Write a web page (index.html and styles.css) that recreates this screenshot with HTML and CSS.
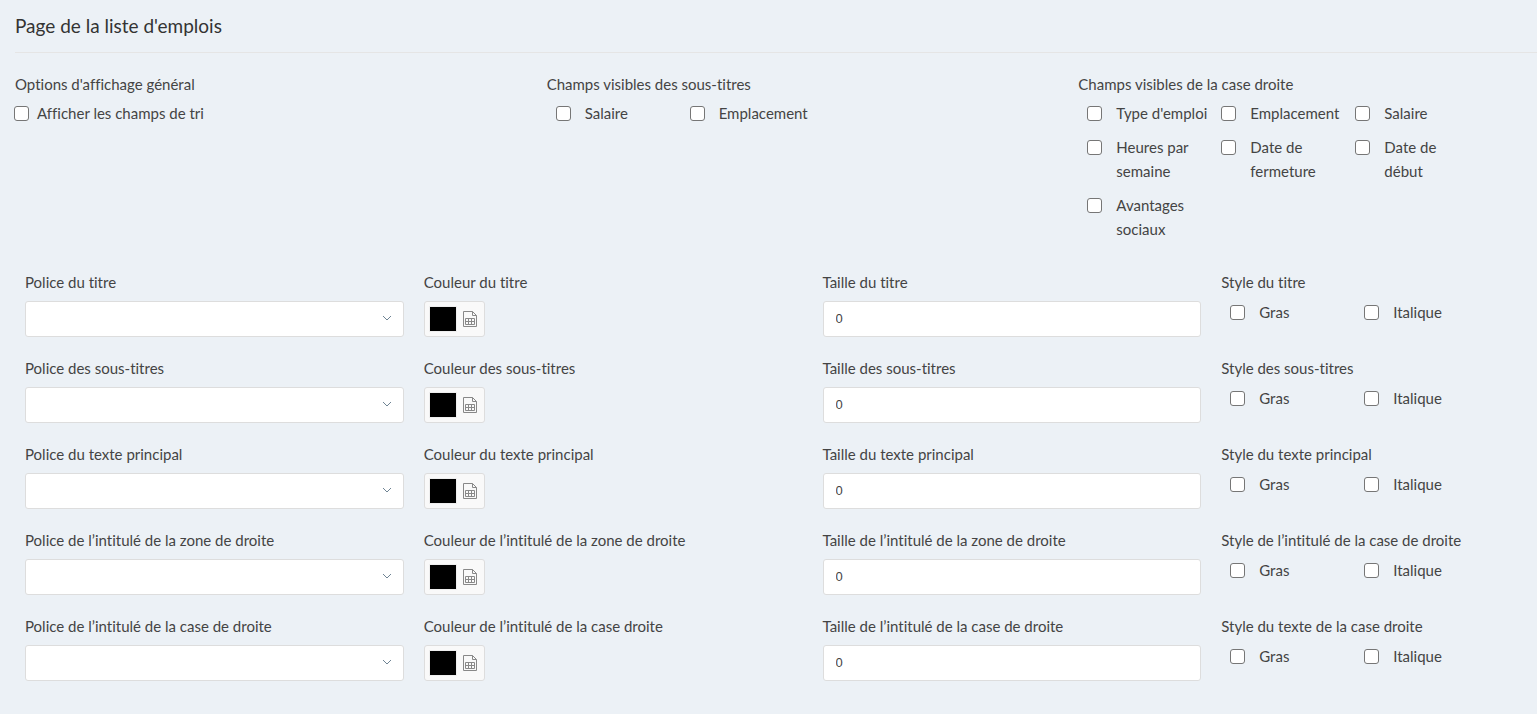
FILE: index.html
```
<!DOCTYPE html>
<html lang="fr">

<head>
    <meta charset="UTF-8">
    <meta name="viewport" content="width=device-width, initial-scale=1.0">
    <title>Page de la liste d'emplois</title>
    <link rel="stylesheet" href="styles.css">
</head>

<body>
    <!-- Icône partagée par les sélecteurs de couleur -->
    <svg class="sprite" aria-hidden="true">
        <symbol id="icon-palette" viewBox="0 0 16 18">
            <path d="M2 1.5h8.5l4 4v11H1.5v-15zM10.5 1.5v4h4M3.5 8.5h9v6h-9zM3.5 11.5h9M6.5 8.5v6M9.5 8.5v6" fill="none" stroke="currentColor" />
        </symbol>
    </svg>

    <main class="settings">
        <h1 class="page-title">Page de la liste d'emplois</h1>

        <!-- Options d'affichage -->
        <div class="options">
            <fieldset class="group">
                <legend>Options d'affichage général</legend>
                <label class="check-single"><input type="checkbox"><span>Afficher les champs de tri</span></label>
            </fieldset>
            <fieldset class="group">
                <legend>Champs visibles des sous-titres</legend>
                <div class="checks">
                    <label class="check"><input type="checkbox"><span>Salaire</span></label>
                    <label class="check"><input type="checkbox"><span>Emplacement</span></label>
                </div>
            </fieldset>
            <fieldset class="group">
                <legend>Champs visibles de la case droite</legend>
                <div class="checks">
                    <label class="check"><input type="checkbox"><span>Type d'emploi</span></label>
                    <label class="check"><input type="checkbox"><span>Emplacement</span></label>
                    <label class="check"><input type="checkbox"><span>Salaire</span></label>
                    <label class="check"><input type="checkbox"><span>Heures par semaine</span></label>
                    <label class="check"><input type="checkbox"><span>Date de fermeture</span></label>
                    <label class="check"><input type="checkbox"><span>Date de début</span></label>
                    <label class="check"><input type="checkbox"><span>Avantages sociaux</span></label>
                </div>
            </fieldset>
        </div>

        <!-- Polices, couleurs, tailles et styles -->
        <div class="fonts">
            <div class="field">
                <label for="title-font">Police du titre</label>
                <select id="title-font" class="select"><option></option></select>
            </div>
            <div class="field">
                <label for="title-color">Couleur du titre</label>
                <button type="button" id="title-color" class="color-button"><span class="swatch"></span><svg class="icon"><use href="#icon-palette" /></svg></button>
            </div>
            <div class="field">
                <label for="title-size">Taille du titre</label>
                <input type="text" id="title-size" class="input" value="0">
            </div>
            <fieldset class="group">
                <legend>Style du titre</legend>
                <div class="checks">
                    <label class="check"><input type="checkbox"><span>Gras</span></label>
                    <label class="check"><input type="checkbox"><span>Italique</span></label>
                </div>
            </fieldset>

            <div class="field">
                <label for="subtitle-font">Police des sous-titres</label>
                <select id="subtitle-font" class="select"><option></option></select>
            </div>
            <div class="field">
                <label for="subtitle-color">Couleur des sous-titres</label>
                <button type="button" id="subtitle-color" class="color-button"><span class="swatch"></span><svg class="icon"><use href="#icon-palette" /></svg></button>
            </div>
            <div class="field">
                <label for="subtitle-size">Taille des sous-titres</label>
                <input type="text" id="subtitle-size" class="input" value="0">
            </div>
            <fieldset class="group">
                <legend>Style des sous-titres</legend>
                <div class="checks">
                    <label class="check"><input type="checkbox"><span>Gras</span></label>
                    <label class="check"><input type="checkbox"><span>Italique</span></label>
                </div>
            </fieldset>

            <div class="field">
                <label for="text-font">Police du texte principal</label>
                <select id="text-font" class="select"><option></option></select>
            </div>
            <div class="field">
                <label for="text-color">Couleur du texte principal</label>
                <button type="button" id="text-color" class="color-button"><span class="swatch"></span><svg class="icon"><use href="#icon-palette" /></svg></button>
            </div>
            <div class="field">
                <label for="text-size">Taille du texte principal</label>
                <input type="text" id="text-size" class="input" value="0">
            </div>
            <fieldset class="group">
                <legend>Style du texte principal</legend>
                <div class="checks">
                    <label class="check"><input type="checkbox"><span>Gras</span></label>
                    <label class="check"><input type="checkbox"><span>Italique</span></label>
                </div>
            </fieldset>

            <div class="field">
                <label for="zone-font">Police de l’intitulé de la zone de droite</label>
                <select id="zone-font" class="select"><option></option></select>
            </div>
            <div class="field">
                <label for="zone-color">Couleur de l’intitulé de la zone de droite</label>
                <button type="button" id="zone-color" class="color-button"><span class="swatch"></span><svg class="icon"><use href="#icon-palette" /></svg></button>
            </div>
            <div class="field">
                <label for="zone-size">Taille de l’intitulé de la zone de droite</label>
                <input type="text" id="zone-size" class="input" value="0">
            </div>
            <fieldset class="group">
                <legend>Style de l’intitulé de la case de droite</legend>
                <div class="checks">
                    <label class="check"><input type="checkbox"><span>Gras</span></label>
                    <label class="check"><input type="checkbox"><span>Italique</span></label>
                </div>
            </fieldset>

            <div class="field">
                <label for="box-font">Police de l’intitulé de la case de droite</label>
                <select id="box-font" class="select"><option></option></select>
            </div>
            <div class="field">
                <label for="box-color">Couleur de l’intitulé de la case droite</label>
                <button type="button" id="box-color" class="color-button"><span class="swatch"></span><svg class="icon"><use href="#icon-palette" /></svg></button>
            </div>
            <div class="field">
                <label for="box-size">Taille de l’intitulé de la case de droite</label>
                <input type="text" id="box-size" class="input" value="0">
            </div>
            <fieldset class="group">
                <legend>Style du texte de la case droite</legend>
                <div class="checks">
                    <label class="check"><input type="checkbox"><span>Gras</span></label>
                    <label class="check"><input type="checkbox"><span>Italique</span></label>
                </div>
            </fieldset>
        </div>
    </main>
</body>

</html>
```
FILE: styles.css
```
/* Styles généraux */
* {
    box-sizing: border-box;
}

body {
    margin: 0;
    background-color: #ecf1f6;
    color: #444;
    font-family: Lato, "Liberation Sans", sans-serif;
    font-size: 15px;
    font-variant-ligatures: none;
    line-height: 24px;
    overflow-x: hidden;
}

/* Le panneau déborde à droite de la fenêtre */
.settings {
    margin: 0 -73px 0 15px;
}

.page-title {
    margin: 0 0 19px;
    padding: 14px 0;
    border-bottom: 1px solid #e5e5e5;
    color: #333;
    font-size: 19px;
    font-weight: 400;
    line-height: 24px;
}

.sprite {
    display: none;
}

/* Groupes de cases à cocher */
.options {
    display: grid;
    grid-template-columns: repeat(3, 1fr);
    margin-bottom: 29px;
}

.group {
    min-width: 0;
    margin: 0;
    padding: 0;
    border: 0;
}

.group legend {
    padding: 0;
    margin-bottom: 5px;
}

.fonts .group legend {
    margin-bottom: 6px;
}

.checks {
    display: flex;
    flex-wrap: wrap;
    row-gap: 10px;
}

.check {
    display: flex;
    gap: 14px;
    width: 134px;
    padding-left: 9px;
}

.check span {
    max-width: 92px;
}

.check-single {
    display: flex;
    gap: 8px;
    margin-left: -1px;
}

input[type="checkbox"] {
    appearance: none;
    flex: none;
    width: 15px;
    height: 15px;
    margin: 5px 0 0;
    border: 1px solid #767676;
    border-radius: 3px;
    background-color: #fff;
}

input[type="checkbox"]:checked {
    background-color: #0075ff;
}

/* Champs */
.fonts {
    display: grid;
    grid-template-columns: repeat(4, 1fr);
    gap: 19px 20px;
    margin: 0 10px;
}

.field {
    display: flex;
    flex-direction: column;
    align-items: flex-start;
    gap: 7px;
}

.select,
.input {
    width: 100%;
    height: 36px;
    padding: 0 12px 2px;
    border: 1px solid #ddd;
    border-radius: 3px;
    background-color: #fff;
    color: #444;
    font-family: "Liberation Sans", Arial, sans-serif;
    font-size: 13px;
}

.select {
    appearance: none;
    background-image: url("data:image/svg+xml,%3Csvg xmlns='http://www.w3.org/2000/svg' width='10' height='8'%3E%3Cpath d='M1 1l4 4 4-4' fill='none' stroke='%236f8494'/%3E%3C/svg%3E");
    background-repeat: no-repeat;
    background-position: right 11px center;
}

.color-button {
    display: flex;
    align-items: center;
    gap: 5px;
    height: 36px;
    padding: 0 6px 0 4px;
    border: 1px solid #ddd;
    border-radius: 3px;
    background-color: #f9f9f9;
    color: #888;
    cursor: pointer;
}

.swatch {
    width: 28px;
    height: 26px;
    border: 1px solid #eee;
    background-color: #000;
}

.icon {
    width: 16px;
    height: 18px;
}
```
